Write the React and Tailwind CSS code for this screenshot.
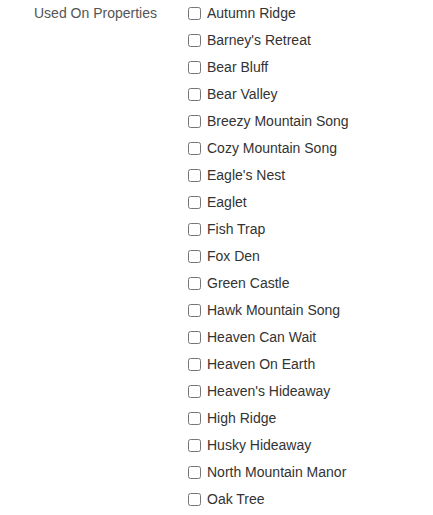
import React from 'react';

const properties = [
  'Autumn Ridge',
  "Barney's Retreat",
  'Bear Bluff',
  'Bear Valley',
  'Breezy Mountain Song',
  'Cozy Mountain Song',
  "Eagle's Nest",
  'Eaglet',
  'Fish Trap',
  'Fox Den',
  'Green Castle',
  'Hawk Mountain Song',
  'Heaven Can Wait',
  'Heaven On Earth',
  "Heaven's Hideaway",
  'High Ridge',
  'Husky Hideaway',
  'North Mountain Manor',
  'Oak Tree',
];

export default function App() {
  return (
    <div className="w-[433px] h-[515px] bg-white overflow-hidden font-['Liberation_Sans',Arial,sans-serif] text-[14px]">
      <div className="flex pl-[34px]">
        <div className="w-[154px] h-[27px] flex items-center text-[#555555]">Used On Properties</div>
        <div className="flex flex-col">
          {properties.map((p) => (
            <label key={p} className="h-[27px] flex items-center gap-[6px] text-[#333333]">
              <input type="checkbox" className="w-[13px] h-[13px] m-0" />
              <span>{p}</span>
            </label>
          ))}
        </div>
      </div>
    </div>
  );
}
